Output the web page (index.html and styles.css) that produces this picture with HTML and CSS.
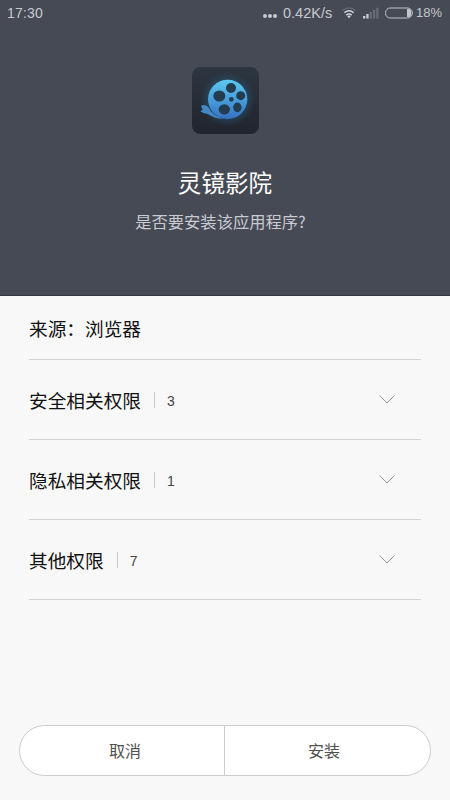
FILE: index.html
```html
<!DOCTYPE html>
<html lang="zh-CN">
<head>
<meta charset="utf-8">
<title>灵镜影院</title>
<link rel="stylesheet" href="styles.css">
</head>
<body>
<div class="screen">
  <header class="hero">
    <div class="status">
      <span class="time">17:30</span>
      <span class="dots"><i></i><i></i><i></i></span>
      <span class="speed">0.42K/s</span>
      <svg class="wifi" width="14" height="12" viewBox="0 0 14 12" fill="none" stroke-width="1.4">
        <path d="M.7 3.4Q7-1.6 13.3 3.4" stroke="#666a74"/>
        <path d="M2.3 5.7Q7 1.9 11.7 5.7M4.3 8.1Q7 6 9.7 8.1" stroke="#d3d5db"/>
        <path d="M5.3 9.2Q7 8 8.700 9.200L7 11.200Z" fill="#d3d5db"/>
      </svg>
      <svg class="signal" width="16" height="12" viewBox="0 0 16 12">
        <path d="M0 9h2.300v2.500H0zM3.300 7h2.300v4.500H3.300z" fill="#c9cbd2"/>
        <path d="M6.600 5h2.300v6.500H6.600zM9.900 2.700h2.300v8.800H9.900zM13.200.8h2.300v10.700h-2.300z" fill="#686b75"/>
      </svg>
      <svg class="battery" width="29" height="12" viewBox="0 0 29 12">
        <rect x=".6" y="1" width="26.500" height="10" rx="4.500" fill="none" stroke="#c2c4cb"/>
        <path d="M22 2h2q2 0 2 2v4q0 2-2 2h-2z" fill="#c2c4cb"/>
        <path d="M27.200 4q1.600 2 0 4z" fill="#c2c4cb"/>
      </svg>
      <span class="percent">18%</span>
    </div>
    <svg class="app-icon" width="67" height="67" viewBox="0 0 201 201">
      <defs>
        <linearGradient id="tile" x1="0" y1="0" x2="0" y2="1"><stop offset="0" stop-color="#2d3641"/><stop offset="1" stop-color="#20242e"/></linearGradient>
        <linearGradient id="reel" x1="0" y1="0" x2="0" y2="1"><stop offset="0" stop-color="#5bcaf2"/><stop offset="1" stop-color="#3672c2"/></linearGradient>
        <radialGradient id="glow"><stop offset=".6" stop-color="#275a7b" stop-opacity=".6"/><stop offset="1" stop-color="#275a7b" stop-opacity="0"/></radialGradient>
      </defs>
      <rect width="201" height="201" rx="25" fill="url(#tile)"/>
      <circle cx="107" cy="97" r="82" fill="url(#glow)"/>
      <path d="M27 116Q38 111 48 119L54 128Q61 143 94 156Q67 154 47 141Q35 141 24 132L32 129Z" fill="#4288c4"/>
      <circle cx="107" cy="97" r="59" fill="url(#reel)"/>
      <g fill="#233c50">
        <circle cx="117" cy="63" r="15"/><ellipse cx="82" cy="87" rx="18" ry="16.500"/>
        <circle cx="146" cy="86" r="13.500"/><ellipse cx="97" cy="127" rx="17" ry="15.500"/>
        <ellipse cx="136" cy="121" rx="12.500" ry="14.500"/><circle cx="118" cy="97" r="7"/>
      </g>
    </svg>
    <h1 class="title">灵镜影院</h1>
    <p class="question">是否要安装该应用程序?</p>
  </header>
  <main class="list">
    <div class="row source">来源：浏览器</div>
    <div class="row">
      <span>安全相关权限</span><span class="bar"></span><span class="count">3</span>
      <svg class="chevron" width="16" height="9" viewBox="0 0 16 9"><path d="M.5.500 8 8 15.500.5"/></svg>
    </div>
    <div class="row">
      <span>隐私相关权限</span><span class="bar"></span><span class="count">1</span>
      <svg class="chevron" width="16" height="9" viewBox="0 0 16 9"><path d="M.5.500 8 8 15.500.5"/></svg>
    </div>
    <div class="row">
      <span>其他权限</span><span class="bar"></span><span class="count">7</span>
      <svg class="chevron" width="16" height="9" viewBox="0 0 16 9"><path d="M.5.500 8 8 15.500.5"/></svg>
    </div>
  </main>
  <footer class="actions">
    <button class="action cancel">取消</button>
    <button class="action install">安装</button>
  </footer>
</div>
</body>
</html>
```
FILE: styles.css
```css
* { box-sizing: border-box; }
body { margin: 0; }
.screen {
  width: 450px;
  height: 800px;
  display: flex;
  flex-direction: column;
  background: #f8f8f8;
  font-family: "Noto Sans CJK SC", sans-serif;
  color: #111;
}
.hero {
  height: 296px;
  flex: none;
  display: flex;
  flex-direction: column;
  align-items: center;
  background: #464a54;
  border-bottom: 1px solid #343641;
}
.status {
  width: 100%;
  height: 26px;
  flex: none;
  display: flex;
  align-items: center;
  padding: 0 8px 0 7px;
  font: 400 14px/26px "Liberation Sans", sans-serif;
  color: #c6c8cf;
}
.time { letter-spacing: .2px; }
.dots { display: flex; gap: 1px; margin: 6px 6px 0 auto; }
.dots i { width: 4px; height: 4px; border-radius: 50%; background: #c6c8cf; }
.speed { width: 51px; font-size: 14.5px; white-space: nowrap; }
.wifi { margin-left: 8px; }
.signal { margin-left: 7px; }
.battery { margin-left: 6px; }
.percent { width: 26px; margin-left: 2px; font-size: 13px; }
.app-icon { flex: none; margin: 41px 0 0; }
.title {
  margin: 31px 0 0;
  font-size: 23.6px;
  line-height: 34px;
  font-weight: 400;
  color: #fff;
}
.question {
  margin: 9px 0 0;
  padding-right: 9px;
  font-size: 16.3px;
  line-height: 26px;
  font-weight: 400;
  color: #c9cbd2;
}
.list { flex: 1; padding: 0 29px; }
.row {
  height: 80px;
  display: flex;
  align-items: center;
  border-bottom: 1px solid #d5d5d5;
  font-size: 18.67px;
  font-weight: 400;
}
.source { height: 64px; }
.bar { width: 1px; height: 16px; margin: 0 12px 0 13px; background: #c8c8c8; }
.count { margin-top: 2px; font: 400 14px/20px "Liberation Sans", sans-serif; color: #444; }
.chevron {
  margin: -1px 26px 0 auto;
  fill: none;
  stroke: #999;
  stroke-width: 1;
}
.actions {
  height: 51px;
  flex: none;
  display: flex;
  margin: 0 19px 24px;
  border: 1px solid #ccc;
  border-radius: 26px;
  background: #fff;
  overflow: hidden;
}
.action {
  border: 0;
  background: none;
  font: 400 16px/24px "Noto Sans CJK SC", sans-serif;
  color: #505050;
}
.cancel { width: 204px; padding: 0 0 1px 6px; }
.install { flex: 1; padding: 0 7px 1px 0; border-left: 1px solid #ccc; }
```
